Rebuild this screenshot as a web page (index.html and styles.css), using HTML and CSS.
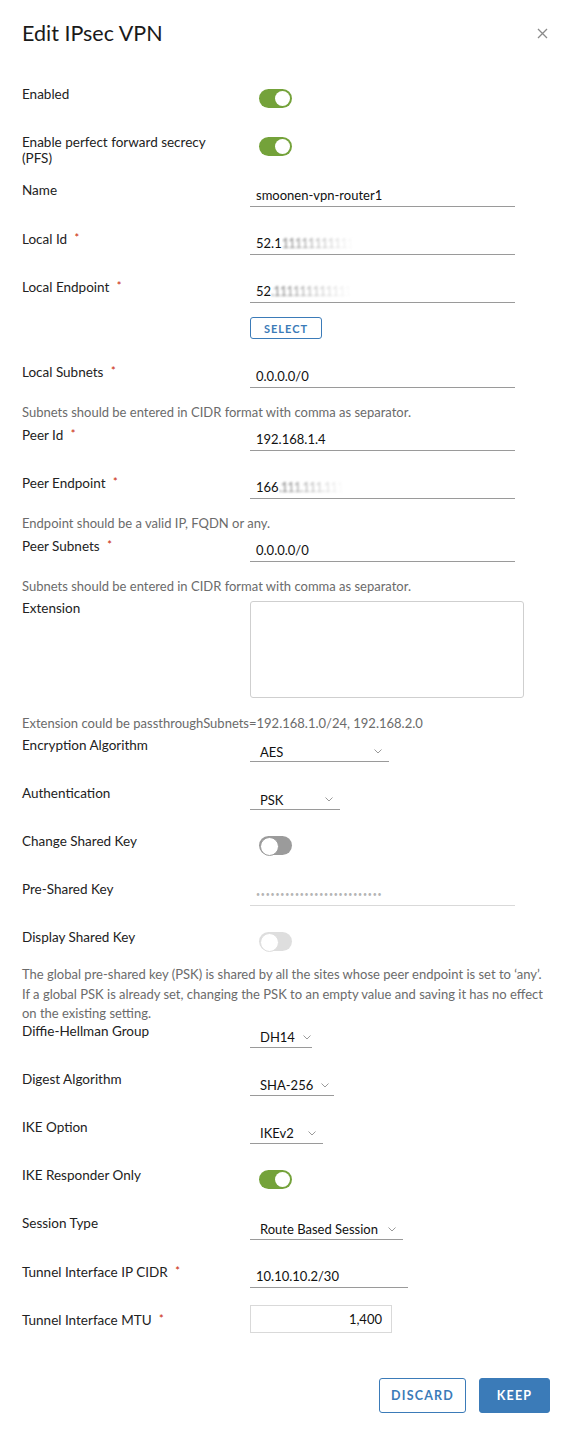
FILE: index.html
```html
<!DOCTYPE html>
<html lang="en">
<head>
<meta charset="utf-8">
<title>Edit IPsec VPN</title>
<link rel="stylesheet" href="styles.css">
</head>
<body>
<div class="modal">
  <header class="modal-header">
    <h1 class="title">Edit IPsec VPN</h1>
    <button class="close" aria-label="Close">
      <svg width="11" height="11" viewBox="0 0 11 11"><path d="M1 1L10 10M10 1L1 10" stroke="#8a8a8a" stroke-width="1.3" fill="none"/></svg>
    </button>
  </header>

  <div class="form">
    <div class="field">
      <div class="label">Enabled</div>
      <div class="ctl"><span class="toggle on"></span></div>
    </div>
    <div class="field">
      <div class="label">Enable perfect forward secrecy (PFS)</div>
      <div class="ctl"><span class="toggle on"></span></div>
    </div>
    <div class="field">
      <div class="label">Name</div>
      <div class="ctl"><div class="input">smoonen-vpn-router1</div></div>
    </div>
    <div class="field">
      <div class="label">Local Id <span class="req">*</span></div>
      <div class="ctl"><div class="input">52.1<span class="blur">11111111111</span></div></div>
    </div>
    <div class="field field-select">
      <div class="label">Local Endpoint <span class="req">*</span></div>
      <div class="ctl">
        <div class="input">52<span class="blur">.111111111111</span></div>
        <button class="btn-outline-sm">SELECT</button>
      </div>
    </div>
    <div class="field has-help">
      <div class="label">Local Subnets <span class="req">*</span></div>
      <div class="ctl"><div class="input">0.0.0.0/0</div></div>
    </div>
    <p class="help">Subnets should be entered in CIDR format with comma as separator.</p>
    <div class="field">
      <div class="label">Peer Id <span class="req">*</span></div>
      <div class="ctl"><div class="input">192.168.1.4</div></div>
    </div>
    <div class="field has-help">
      <div class="label">Peer Endpoint <span class="req">*</span></div>
      <div class="ctl"><div class="input">166<span class="blur">.111.111.111</span></div></div>
    </div>
    <p class="help">Endpoint should be a valid IP, FQDN or any.</p>
    <div class="field has-help">
      <div class="label">Peer Subnets <span class="req">*</span></div>
      <div class="ctl"><div class="input">0.0.0.0/0</div></div>
    </div>
    <p class="help">Subnets should be entered in CIDR format with comma as separator.</p>
    <div class="field field-area">
      <div class="label">Extension</div>
      <div class="ctl"><div class="textarea"></div></div>
    </div>
    <p class="help">Extension could be passthroughSubnets=192.168.1.0/24, 192.168.2.0</p>
    <div class="field">
      <div class="label">Encryption Algorithm</div>
      <div class="ctl"><div class="select w-aes"><span>AES</span><svg class="chev" width="8" height="5" viewBox="0 0 8 5"><path d="M0.5 0.5L4 4L7.5 0.5" stroke="#9a9a9a" fill="none"/></svg></div></div>
    </div>
    <div class="field">
      <div class="label">Authentication</div>
      <div class="ctl"><div class="select w-psk"><span>PSK</span><svg class="chev" width="8" height="5" viewBox="0 0 8 5"><path d="M0.5 0.5L4 4L7.5 0.5" stroke="#9a9a9a" fill="none"/></svg></div></div>
    </div>
    <div class="field">
      <div class="label">Change Shared Key</div>
      <div class="ctl"><span class="toggle off"></span></div>
    </div>
    <div class="field">
      <div class="label">Pre-Shared Key</div>
      <div class="ctl"><div class="input disabled"><span class="dots">••••••••••••••••••••••••••</span></div></div>
    </div>
    <div class="field has-help-toggle">
      <div class="label">Display Shared Key</div>
      <div class="ctl"><span class="toggle disabled"></span></div>
    </div>
    <p class="help help-multi">The global pre-shared key (PSK) is shared by all the sites whose peer endpoint is set to ‘any’.<br>If a global PSK is already set, changing the PSK to an empty value and saving it has no effect<br>on the existing setting.</p>
    <div class="field">
      <div class="label">Diffie-Hellman Group</div>
      <div class="ctl"><div class="select w-dh"><span>DH14</span><svg class="chev" width="8" height="5" viewBox="0 0 8 5"><path d="M0.5 0.5L4 4L7.5 0.5" stroke="#9a9a9a" fill="none"/></svg></div></div>
    </div>
    <div class="field">
      <div class="label">Digest Algorithm</div>
      <div class="ctl"><div class="select w-sha"><span>SHA-256</span><svg class="chev" width="8" height="5" viewBox="0 0 8 5"><path d="M0.5 0.5L4 4L7.5 0.5" stroke="#9a9a9a" fill="none"/></svg></div></div>
    </div>
    <div class="field">
      <div class="label">IKE Option</div>
      <div class="ctl"><div class="select w-ike"><span>IKEv2</span><svg class="chev" width="8" height="5" viewBox="0 0 8 5"><path d="M0.5 0.5L4 4L7.5 0.5" stroke="#9a9a9a" fill="none"/></svg></div></div>
    </div>
    <div class="field">
      <div class="label">IKE Responder Only</div>
      <div class="ctl"><span class="toggle on"></span></div>
    </div>
    <div class="field">
      <div class="label">Session Type</div>
      <div class="ctl"><div class="select w-route"><span>Route Based Session</span><svg class="chev" width="8" height="5" viewBox="0 0 8 5"><path d="M0.5 0.5L4 4L7.5 0.5" stroke="#9a9a9a" fill="none"/></svg></div></div>
    </div>
    <div class="field">
      <div class="label">Tunnel Interface IP CIDR <span class="req">*</span></div>
      <div class="ctl"><div class="input w-cidr">10.10.10.2/30</div></div>
    </div>
    <div class="field">
      <div class="label">Tunnel Interface MTU <span class="req">*</span></div>
      <div class="ctl"><div class="number">1,400</div></div>
    </div>
  </div>

  <footer class="modal-footer">
    <button class="btn btn-outline">DISCARD</button>
    <button class="btn btn-primary">KEEP</button>
  </footer>
</div>
</body>
</html>
```

FILE: styles.css
```css
* { box-sizing: border-box; }

body {
  margin: 0;
  background: #fff;
  font-family: Lato, "Liberation Sans", sans-serif;
  color: #1f1f1f;
}

.modal {
  width: 572px;
  padding: 0 22px;
}

.modal-header {
  height: 66px;
  display: flex;
  align-items: center;
  justify-content: space-between;
}

.title {
  margin: 0;
  font-size: 21.5px;
  font-weight: 400;
  color: #1a1a1a;
}

.close {
  border: 0;
  background: none;
  padding: 0;
  margin-right: 2px;
  width: 11px;
  height: 11px;
  display: flex;
}

.form {
  margin-top: 20px;
}

.field {
  display: grid;
  grid-template-columns: 228px 1fr;
  align-items: start;
  min-height: 48px;
}

.label {
  font-size: 13.5px;
  line-height: 16px;
  padding-right: 18px;
  color: #222;
}

.req {
  color: #c92100;
  font-size: 11px;
  vertical-align: 2px;
  margin-left: 4px;
}

.input {
  margin-top: 3px;
  width: 265px;
  height: 22px;
  border-bottom: 1px solid #9a9a9a;
  font-size: 13px;
  line-height: 20px;
  padding-left: 6px;
  color: #111;
  white-space: nowrap;
  overflow: hidden;
}

.input.w-cidr { width: 158px; }

.input.disabled { border-bottom-color: #d9d9d9; }

.dots {
  color: #b5b5b5;
  font-size: 7px;
  letter-spacing: 0.8px;
  vertical-align: 2px;
}

.blur {
  filter: blur(1.2px);
  color: #888;
  letter-spacing: -1px;
  -webkit-mask-image: linear-gradient(to right, #000 10%, transparent 100%);
  mask-image: linear-gradient(to right, #000 10%, transparent 100%);
}

.field-select { min-height: 85px; }

.btn-outline-sm {
  display: block;
  margin-top: 14px;
  width: 72px;
  height: 22px;
  border: 1px solid #3b7bb8;
  border-radius: 3px;
  background: #fff;
  color: #3b7bb8;
  font-family: Lato, "Liberation Sans", sans-serif;
  font-size: 11px;
  font-weight: 700;
  letter-spacing: 1px;
  padding: 0;
}

.has-help { min-height: 40px; }
.has-help-toggle { min-height: 36px; }

.help {
  margin: 0 0 3.5px;
  font-size: 13px;
  line-height: 19.5px;
  color: #6b6b6b;
  white-space: nowrap;
}

.help-multi { margin-bottom: -1px; }

.field-area { min-height: 114px; }

.textarea {
  margin-top: 1px;
  width: 274px;
  height: 97px;
  border: 1px solid #cfcfcf;
  border-radius: 3px;
}

.toggle {
  display: block;
  position: relative;
  margin: 3px 0 0 9px;
  width: 33px;
  height: 19px;
  border-radius: 10px;
}

.toggle::after {
  content: "";
  position: absolute;
  top: 2px;
  width: 15px;
  height: 15px;
  border-radius: 50%;
  background: #fff;
}

.toggle.on { background: #74a23a; }
.toggle.on::after { right: 2px; }

.toggle.off { background: #9b9b9b; }
.toggle.off::after { left: 1px; top: 1px; width: 17px; height: 17px; border: 1px solid #9b9b9b; }

.toggle.disabled { background: #dedede; }
.toggle.disabled::after { left: 1px; top: 1px; width: 17px; height: 17px; border: 1px solid #dedede; }

.select {
  margin-top: 4px;
  height: 21px;
  border-bottom: 1px solid #9a9a9a;
  display: flex;
  align-items: center;
  justify-content: space-between;
  gap: 8px;
  padding: 0 7px 0 10px;
  font-size: 13px;
  color: #111;
}

.select span { line-height: 20px; padding-top: 1px; white-space: nowrap; }
.chev { flex: none; margin-top: 1px; }

.w-aes { width: 139px; }
.w-psk { width: 90px; }
.w-dh { width: 62px; }
.w-sha { width: 84px; }
.w-ike { width: 73px; }
.w-route { width: 153px; }

.number {
  margin-top: -6px;
  width: 142px;
  height: 28px;
  border: 1px solid #d9d9d9;
  font-size: 13px;
  line-height: 26px;
  text-align: right;
  padding-right: 9px;
  color: #111;
}

.modal-footer {
  display: flex;
  justify-content: flex-end;
  gap: 13px;
  margin-top: 19px;
}

.btn {
  height: 35px;
  border-radius: 3px;
  font-family: Lato, "Liberation Sans", sans-serif;
  font-size: 12.5px;
  font-weight: 700;
  letter-spacing: 1.2px;
  padding: 0;
}

.btn-outline {
  width: 87px;
  border: 1px solid #3b7bb8;
  background: #fff;
  color: #3b7bb8;
}

.btn-primary {
  width: 71px;
  border: 1px solid #3b7bb8;
  background: #3b7bb8;
  color: #fff;
}
```
